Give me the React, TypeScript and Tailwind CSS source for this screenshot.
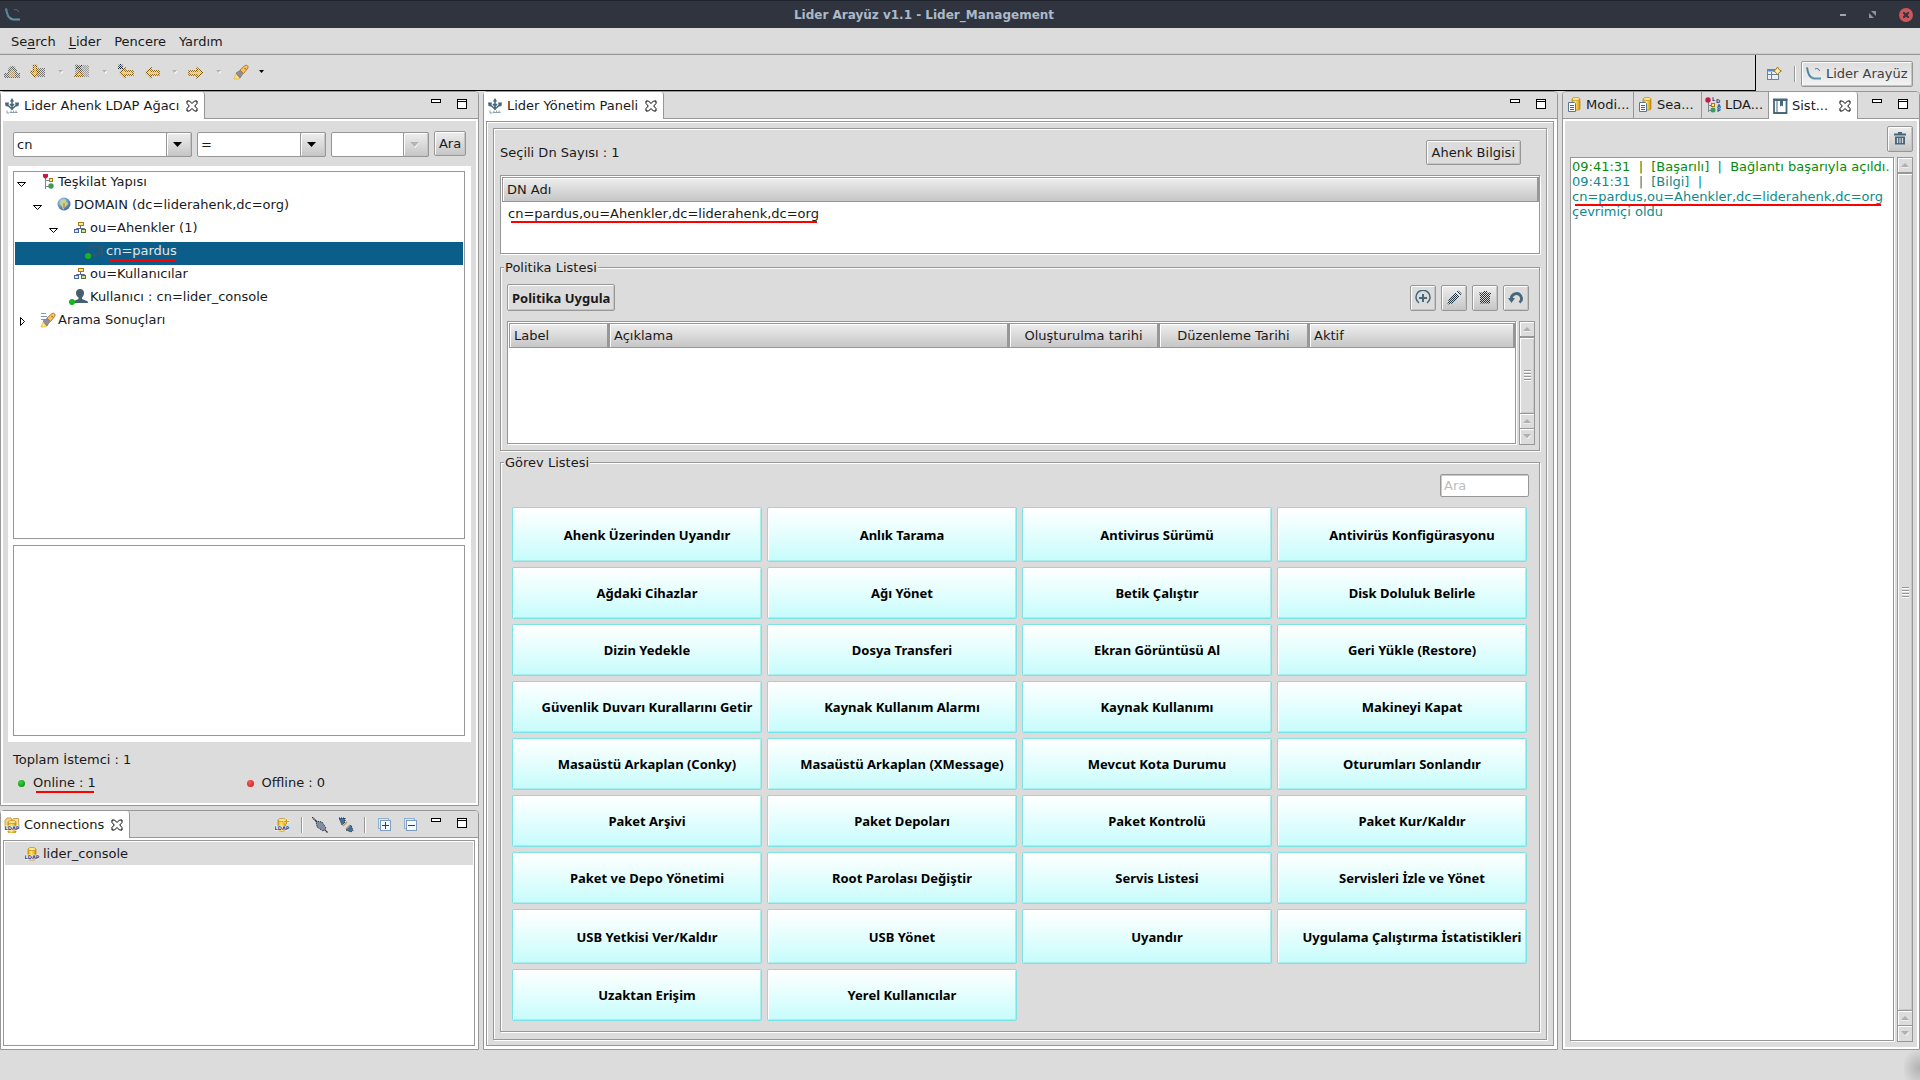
import React from "react";

type Kids = { children?: React.ReactNode };

const SUNKEN = "border border-[#979797] shadow-[inset_1px_1px_0_#fff,1px_1px_0_#fff]";
const RAISED = "border border-[#979797] rounded-[2px] shadow-[inset_1px_1px_0_#fff,inset_-1px_-1px_0_#c4c4c4]";
const SHADED = "bg-linear-to-b from-[#eeeeee] to-[#c6c6c6]";

/* ---------- icons ---------- */

function Icon({ size = 16, box = "0 0 16 16", crisp = false, children }: Kids & { size?: number; box?: string; crisp?: boolean }) {
  return (
    <svg
      width={size}
      height={size}
      viewBox={box}
      fill="none"
      className="block shrink-0"
      shapeRendering={crisp ? "crispEdges" : "auto"}
      aria-hidden="true"
    >
      {children}
    </svg>
  );
}

function IconDefs() {
  return (
    <svg width="0" height="0" className="absolute" aria-hidden="true">
      <defs>
        <pattern id="dots" width="2" height="2" patternUnits="userSpaceOnUse">
          <rect width="1" height="1" fill="#fff" />
          <rect x="1" y="1" width="1" height="1" fill="#fff" />
        </pattern>
        <mask id="dither" maskUnits="userSpaceOnUse" x="0" y="0" width="20" height="20">
          <rect width="20" height="20" fill="url(#dots)" shapeRendering="crispEdges" />
        </mask>
        <linearGradient id="gold" x1="0" x2="1">
          <stop offset="0" stopColor="#e0a20c" />
          <stop offset=".4" stopColor="#ffe970" />
          <stop offset="1" stopColor="#d08c00" />
        </linearGradient>
        <radialGradient id="globe" cx=".4" cy=".35" r=".7">
          <stop offset="0" stopColor="#cfe6f4" />
          <stop offset=".6" stopColor="#6493bf" />
          <stop offset="1" stopColor="#3c5f92" />
        </radialGradient>
      </defs>
    </svg>
  );
}

const LiderLogo = () => (
  <Icon>
    <path d="M1 1.500C2 7 3 11.500 8 12.500H15" stroke="#5f94ad" strokeWidth="2" />
    <path d="M1 1.500C2 7 3 10 5 11.500" stroke="#4c7f99" strokeWidth="1" />
    <path d="M9 3c2-1 4-.5 4.500 2" stroke="#56707f" strokeWidth="1" />
  </Icon>
);

const TreeLogo = () => (
  <Icon>
    <path d="M8 12V3M8 11L3.500 7M8 11l4.500-4M8 8L6 6M8 8l2-2" stroke="#46687a" strokeWidth="1.600" />
    <path d="M5.800 3.500L8 0l2.200 3.500zM1 4.500h4L4 8.500 1.500 8zM15 4.500h-4l1 4 2.500-.5z" fill="#46687a" />
    <path d="M3 12.500v2.500h2M7 12.500v2M9.500 12.500v2.500M12 12.500v2.500M5.500 14.500h8" stroke="#8aa0ac" />
  </Icon>
);

const CloseX = () => (
  <Icon size={12} box="0 0 12 12">
    <path
      d="M1 1h2.500L6 3.500 8.500 1H11v2.500L8.700 6 11 8.500V11H8.500L6 8.500 3.500 11H1V8.500L3.300 6 1 3.500z"
      stroke="#000"
      fill="#fff"
    />
  </Icon>
);

const MinIcon = () => (
  <Icon size={12} box="0 0 12 12" crisp>
    <rect x="1.500" y="1.500" width="9" height="3" stroke="#000" fill="#fff" />
  </Icon>
);
const MaxIcon = () => (
  <Icon size={12} box="0 0 12 12" crisp>
    <rect x="1.500" y="1.500" width="9" height="9" stroke="#000" fill="#fff" />
    <path d="M1 3.500h10" stroke="#000" />
  </Icon>
);

const ArrowShape = ({ dark = false }: { dark?: boolean }) => (
  <svg width="9" height="6" viewBox="0 0 9 6" className="block shrink-0" aria-hidden="true">
    {!dark && <path d="M1 1h8L5 6z" fill="#fff" />}
    <path d="M0 0h9L4.500 5z" fill={dark ? "#000" : "#b4b4b4"} />
  </svg>
);

const SmallArrow = ({ dark = false }: { dark?: boolean }) => (
  <svg width="5" height="4" viewBox="0 0 5 4" className="block shrink-0" aria-hidden="true">
    {!dark && <path d="M1 1h4v1L3 4z" fill="#fff" />}
    <path d="M0 0h5L2.500 3z" fill={dark ? "#000" : "#b4b4b4"} />
  </svg>
);

const Dither = ({ children }: Kids) => (
  <Icon>
    <g mask="url(#dither)">{children}</g>
  </Icon>
);

const ToolA = () => (
  <Dither>
    <path d="M4 10V5l3-3h3l3 4v4zM0 9h16v5H0z" fill="#666" />
    <path d="M5 9l3-4 3 4v4H5z" fill="#b09a70" />
  </Dither>
);
const ToolB = () => (
  <Dither>
    <path d="M7 4h8v9H7z" fill="#777" />
    <path d="M3.500 1.500h3v6h3L5 13 .5 7.500h3z" fill="#e0b860" stroke="#7a4f00" strokeWidth="1.400" />
  </Dither>
);
const ToolC = () => (
  <Dither>
    <path d="M1 1h14v12H1z" fill="#9a9a9a" />
    <path d="M1 12l4-5 4 5z" fill="#e0b860" stroke="#7a4f00" strokeWidth="1.400" />
    <path d="M2 1l6 6M8 1L2 5" stroke="#222" strokeWidth="1.500" />
  </Dither>
);
const BackArrow = ({ star = false }: { star?: boolean }) => (
  <Dither>
    <path d="M2 8.500L7 4v3h8v4H7v2.500z" fill="#e5c37a" stroke="#7a4f00" strokeWidth="1.400" />
    {star && <path d="M0 3h5M2.500 0v6M0 5l5-4M0 1l5 4" stroke="#123" strokeWidth="1.200" />}
  </Dither>
);
const NextArrow = () => (
  <Dither>
    <path d="M14.500 8.500L9 4v3H1v4h8v2.500z" fill="#e5c37a" stroke="#7a4f00" strokeWidth="1.400" />
  </Dither>
);

const Torch = ({ lines = false }: { lines?: boolean }) => (
  <Icon>
    {lines && <path d="M1 1.500h5M1 4.500h6M1 7.500h4" stroke="#7f93bd" />}
    <path d="M1 15l2-5 4 4-2 1z" fill="#ffe37a" stroke="#e0a92e" strokeWidth=".6" />
    <path d="M3 9l4-2.500L10 9.500 7 14z" fill="#8d8f9c" stroke="#666" strokeWidth=".6" />
    <path d="M7 6l5-4.500c2-.8 3.500.5 3 2.500L10.500 9.500z" fill="#f6c267" stroke="#b4701c" strokeWidth=".9" />
    <path d="M11.500 4l1.500 1.500" stroke="#8a4d12" />
  </Icon>
);

const NewPerspective = () => (
  <Icon>
    <rect x="1.500" y="3.500" width="11" height="10" fill="#e8eff7" stroke="#6f8299" />
    <path d="M1 4.500h9" stroke="#4e8fcf" strokeWidth="2" />
    <path d="M5.500 6v7M1 8.500h12" stroke="#6f8299" />
    <path d="M11.500 1l1.500 2.500 2.500 1.500L13 6.500 11.500 9 10 6.500 7.500 5 10 3.500z" fill="#fff3b8" stroke="#a87a10" />
  </Icon>
);

const TeskilatIcon = () => (
  <Icon>
    <path d="M5.500 3v12M5.500 6.500h4M5.500 12.500h4" stroke="#7b8794" />
    <path d="M3 0h5v3L5.500 5 3 3z" fill="#c41c45" />
    <rect x="9.500" y="4.500" width="3" height="3" fill="#ffe78a" stroke="#a87a10" />
    <circle cx="11" cy="12" r="2.700" fill="#3f9a58" />
  </Icon>
);
const GlobeIcon = () => (
  <Icon>
    <circle cx="8" cy="7" r="6.500" fill="url(#globe)" />
    <path d="M5 3l2 1 1-2 2 1-1 3 2-1 1 2-3 3-2 3-1-4-2-2z" fill="#c9d58c" />
    <path d="M8 6v5" stroke="#c46a2a" />
  </Icon>
);
const OuIcon = () => (
  <Icon>
    <path d="M8.500 6v3M4.500 10.500v-2h8v2" stroke="#5c6b8a" />
    <rect x="6.500" y="2.500" width="5" height="3" fill="#ffe78a" stroke="#a87a10" />
    <rect x="2.500" y="9.500" width="4" height="3" fill="#dfe8fa" stroke="#4b66a8" />
    <rect x="9.500" y="9.500" width="4" height="3" fill="#cfe89e" stroke="#4d7a2a" />
  </Icon>
);
const Dot = ({ red = false }: { red?: boolean }) => (
  <span
    className={
      red
        ? "block size-[7px] shrink-0 rounded-full bg-radial-[at_40%_35%] from-[#ff5a5a] to-[#d81f1f] to-80%"
        : "block size-[7px] shrink-0 rounded-full bg-radial-[at_40%_35%] from-[#3fd03f] to-[#0d8f12] to-80%"
    }
  />
);
const PcIcon = () => (
  <svg width="20" height="16" viewBox="0 0 20 16" className="block shrink-0" fill="none" aria-hidden="true">
    <rect x="5" y="3" width="10" height="8" stroke="#34566b" strokeWidth="1.500" />
    <path d="M7 12.500h6M18 3v9" stroke="#34566b" strokeWidth="2" />
    <circle cx="4" cy="13" r="3" fill="#18b51c" />
  </svg>
);
const UserIcon = () => (
  <svg width="20" height="16" viewBox="0 0 20 16" className="block shrink-0" fill="none" aria-hidden="true">
    <path d="M12 0c2.500 0 4 1.500 4 4 0 2-1 3.500-2 4.500v1.500l5 2c1 .5 1 1.500 1 2H5c0-1 0-1.500 1-2l4.500-2V8.500C9 7.500 8 6 8 4c0-2.500 1.500-4 4-4z" fill="#46606f" />
    <circle cx="4" cy="13" r="3" fill="#18b51c" />
  </svg>
);

const Cylinder = ({ x = 4, y = 0 }: { x?: number; y?: number }) => (
  <g>
    <path d={`M${x} ${y + 2}v10c0 1.500 8 1.500 8 0v-10z`} fill="url(#gold)" stroke="#bb8205" strokeWidth=".7" />
    <ellipse cx={x + 4} cy={y + 2} rx="4" ry="1.500" fill="#fff0a0" stroke="#bb8205" strokeWidth=".7" />
  </g>
);
const LdapMark = () => (
  <text x="8" y="13" textAnchor="middle" fontFamily="DejaVu Sans" fontSize="5" fontWeight="700" fill="#0c4a8c" stroke="#fff" strokeWidth="1" paintOrder="stroke">
    LDAP
  </text>
);
const LdapIcon = ({ plus = false, folder = false }: { plus?: boolean; folder?: boolean }) => (
  <Icon>
    {folder && <path d="M1 3.500L3 1h4l1 2v8H1z" fill="#f6d68a" stroke="#b98a2c" strokeWidth=".8" />}
    {folder && <path d="M8 3.500L9.500 1.500h5l.500 9H8z" fill="#fbe2a2" stroke="#b98a2c" strokeWidth=".8" />}
    <Cylinder y={folder ? 3 : 1} />
    {plus && <path d="M12.500 1.500v6M9.500 4.500h6" stroke="#fff4c0" strokeWidth="2" />}
    {plus && <path d="M12.500 2v5M10 4.500h5" stroke="#d39a10" />}
    <LdapMark />
  </Icon>
);
const DbPage = () => (
  <Icon>
    <Cylinder x={6} />
    <path d="M2.500 5.500h6l1 1v8h-7z" fill="#fff" stroke="#5c7399" />
    <path d="M4 8.500h4M4 10.500h4M4 12.500h4" stroke="#2a64b0" />
  </Icon>
);
const LdapTree = () => (
  <Icon>
    <path d="M3.500 4v11M3.500 8.500h3M3.500 13.500h3" stroke="#7b8794" />
    <circle cx="3" cy="3" r="2.700" fill="#c41c45" />
    <rect x="6.500" y="6.500" width="3" height="3" fill="#ffe78a" stroke="#a87a10" />
    <circle cx="8" cy="13" r="2.500" fill="#3f9a58" />
    <g fontFamily="DejaVu Sans" fontSize="5" fontWeight="700" fill="#0c4a8c">
      <text x="7" y="4">L</text>
      <text x="11" y="6">D</text>
      <text x="12" y="11">A</text>
      <text x="12" y="15">P</text>
    </g>
  </Icon>
);
const BookIcon = () => (
  <Icon>
    <path d="M2 2h12.500v13H2z" fill="#fff" stroke="#46687a" strokeWidth="1.800" />
    <path d="M5 2v13" stroke="#46687a" />
    <path d="M1 1.500h14.500" stroke="#46687a" strokeWidth="2" />
    <path d="M8 3h3v5.500L9.500 7.500 8 8.500z" fill="#46687a" />
  </Icon>
);
const TrashShape = () => (
  <g>
    <path d="M6 1h4v2H6zM2 2.500h12v2H2zM3 5.500h10v8H3z" fill="#46687a" />
    <path d="M5.500 7v5M8 7v5M10.500 7v5" stroke="#dcdcdc" strokeWidth="1.200" />
  </g>
);
const PlusCircle = () => (
  <Icon>
    <path d="M4 13a7 7 0 1 1 8 0" stroke="#46687a" strokeWidth="1.500" />
    <path d="M8 4v8M4 8h8" stroke="#46687a" strokeWidth="2" />
  </Icon>
);
const UndoIcon = () => (
  <Icon>
    <path d="M3.500 9.500a5 5 0 1 1 8 3" stroke="#46687a" strokeWidth="2.800" />
    <path d="M0 8h7L3.500 13z" fill="#46687a" />
  </Icon>
);
const PencilIcon = () => (
  <Dither>
    <path d="M2 14l1-4 7-7 3 3-7 7zM11 2l1.500-1L15 3.500 14 5z" fill="#1f3440" stroke="#1f3440" />
  </Dither>
);
const DisabledTrash = () => (
  <Dither>
    <path d="M6 1h4v2H6zM2 2.500h12v2H2zM3 4.500h10v9H3z" fill="#1f3440" />
  </Dither>
);
const PlugIcon = () => (
  <Icon>
    <path d="M0 0l16 16" stroke="#333" strokeWidth="1.500" strokeDasharray="1.500 .5" />
    <path d="M4 4l6 1 4 6-3 3-6-4z" fill="#7d8ea5" stroke="#222" strokeDasharray="1 1" />
  </Icon>
);
const UnplugIcon = () => (
  <Icon>
    <path d="M1 1h6v4L4 8z" fill="#41719f" stroke="#222" strokeDasharray="1 1" />
    <path d="M8 13l5-5 2 5.500-2 1.500z" fill="#41719f" stroke="#222" strokeDasharray="1 1" />
    <path d="M5 9l4-4M8 12l4-4" stroke="#b39a7a" strokeWidth="1.500" />
  </Icon>
);
const BoxIcon = ({ plus = false }: { plus?: boolean }) => (
  <Icon crisp>
    <rect x="2.500" y="1.500" width="10" height="10" fill="#dce9f5" stroke="#8fb0cf" />
    <rect x="4.500" y="3.500" width="10" height="10" fill="#f4fbff" stroke="#7f9cc0" />
    <path d="M6 8.500h7" stroke="#0c4a8c" />
    {plus && <path d="M9.500 5v7" stroke="#0c4a8c" />}
  </Icon>
);

/* ---------- building blocks ---------- */

function TabClose() {
  return (
    <button type="button" aria-label="Kapat">
      <CloseX />
    </button>
  );
}

function MinMax() {
  return (
    <div className="ml-auto flex h-full items-start gap-[14px] pt-[6px] pr-[10px]">
      <button type="button" aria-label="Küçült"><MinIcon /></button>
      <button type="button" aria-label="Büyüt"><MaxIcon /></button>
    </div>
  );
}

function ActiveTab({ icon, label, gap = "mr-[7px]" }: { icon: React.ReactNode; label: string; gap?: string }) {
  return (
    <div className="flex h-[27px] shrink-0 items-center rounded-tr-[3px] border-r border-[#979797] bg-white pr-1.5 pl-[3px]">
      {icon}
      <button type="button" role="tab" aria-selected="true" className={`ml-1 ${gap}`}>
        {label}
      </button>
      <TabClose />
    </div>
  );
}

function Panel({ tabs, tools, className, children }: Kids & { tabs: React.ReactNode; tools?: React.ReactNode; className?: string }) {
  return (
    <section className={`flex min-w-0 flex-col rounded-t-[4px] border border-[#979797] bg-white ${className ?? ""}`}>
      <div className="flex h-[27px] shrink-0 rounded-t-[3px] bg-[#dcdcdc] bg-linear-to-t from-[#979797] from-[1px] to-transparent to-[1px]">
        {tabs}
        {tools}
        {tools ? null : <MinMax />}
      </div>
      {children}
    </section>
  );
}

function Combo({ label, value, disabled = false, className }: { label: string; value: string; disabled?: boolean; className: string }) {
  return (
    <div className={`relative h-[25px] ${className}`}>
      <select
        aria-label={label}
        defaultValue={value}
        className="h-full w-full appearance-none rounded-[2px] border border-[#979797] bg-white pr-7 pl-[3px] outline-none"
      >
        <option>{value}</option>
      </select>
      <span className={`pointer-events-none absolute top-0 right-0 flex h-full w-[26px] items-center justify-center pr-1 ${RAISED} ${SHADED}`}>
        <ArrowShape dark={!disabled} />
      </span>
    </div>
  );
}

function TreeRow({ depth, open, icon, label, selected = false }: {
  depth: string;
  open?: boolean;
  icon: React.ReactNode;
  label: string;
  selected?: boolean;
}) {
  return (
    <li
      role="treeitem"
      aria-selected={selected}
      className={`flex h-[23px] items-center pb-[5px] ${depth} ${selected ? "bg-[#0b5e8a] text-[#e6e6e6]" : ""}`}
    >
      <span className="flex w-[21px] shrink-0 justify-start pt-[3px] pl-px">
        {open !== undefined && (
          <button type="button" aria-label={open ? "Daralt" : "Genişlet"}>
            <svg width="11" height="11" viewBox="0 0 11 11" fill="#fff" stroke="#000" className="block" aria-hidden="true">
              {open ? <path d="M1.500 4.500h8l-4 4z" /> : <path d="M4.500 1.500v8l4-4z" />}
            </svg>
          </button>
        )}
      </span>
      <span className="flex w-[22px] shrink-0 justify-end pr-[2px]">{icon}</span>
      {selected ? <Marked>{label}</Marked> : <span>{label}</span>}
    </li>
  );
}

/* text with a red marker line under it */
function Marked({ children, className = "" }: Kids & { className?: string }) {
  return (
    <span className={`relative ${className}`}>
      {children}
      <span className="absolute right-[2px] bottom-[-2px] left-[3px] h-[2px] bg-[#ff0000]" />
    </span>
  );
}

function ScrollButton({ up = false }: { up?: boolean }) {
  return (
    <span className="flex h-[15px] shrink-0 items-center justify-center border-b border-[#979797] shadow-[inset_1px_1px_0_#fff] last:border-b-0">
      <svg width="8" height="5" viewBox="0 0 8 5" className="block" aria-hidden="true">
        {up ? <path d="M0 4.500h8V5H0z" fill="#fff" /> : <path d="M4 5l4-4v1L5 5z" fill="#fff" />}
        {up ? <path d="M4 0l4 4H0z" fill="#b0b0b0" /> : <path d="M0 0h8L4 4z" fill="#b0b0b0" />}
      </svg>
    </span>
  );
}

function ScrollBar() {
  return (
    <div className="flex w-4 shrink-0 flex-col border border-[#979797] bg-[#dcdcdc]" aria-hidden="true">
      <ScrollButton up />
      <span className="flex flex-1 flex-col items-center justify-center gap-px border-y border-[#979797] shadow-[inset_1px_1px_0_#fff,inset_-1px_-1px_0_#c8c8c8]">
        {[0, 1, 2, 3].map((n) => (
          <span key={n} className="h-[2px] w-[7px] border-t border-[#979797] bg-white" />
        ))}
      </span>
      <ScrollButton up />
      <ScrollButton />
    </div>
  );
}

const HEAD = `h-[25px] border-t border-r-2 border-b border-l border-[#979797] px-1 text-left font-normal shadow-[inset_1px_1px_0_#fff] ${SHADED}`;

function SquareButton({ label, shaded = false, children }: Kids & { label: string; shaded?: boolean }) {
  return (
    <button type="button" aria-label={label} className={`flex size-[26px] items-center justify-center ${RAISED} ${shaded ? SHADED : "bg-[#dcdcdc]"}`}>
      {children}
    </button>
  );
}

const TASKS: string[][] = [
  ["Ahenk Üzerinden Uyandır", "Anlık Tarama", "Antivirus Sürümü", "Antivirüs Konfigürasyonu"],
  ["Ağdaki Cihazlar", "Ağı Yönet", "Betik Çalıştır", "Disk Doluluk Belirle"],
  ["Dizin Yedekle", "Dosya Transferi", "Ekran Görüntüsü Al", "Geri Yükle (Restore)"],
  ["Güvenlik Duvarı Kurallarını Getir", "Kaynak Kullanım Alarmı", "Kaynak Kullanımı", "Makineyi Kapat"],
  ["Masaüstü Arkaplan (Conky)", "Masaüstü Arkaplan (XMessage)", "Mevcut Kota Durumu", "Oturumları Sonlandır"],
  ["Paket Arşivi", "Paket Depoları", "Paket Kontrolü", "Paket Kur/Kaldır"],
  ["Paket ve Depo Yönetimi", "Root Parolası Değiştir", "Servis Listesi", "Servisleri İzle ve Yönet"],
  ["USB Yetkisi Ver/Kaldır", "USB Yönet", "Uyandır", "Uygulama Çalıştırma İstatistikleri"],
  ["Uzaktan Erişim", "Yerel Kullanıcılar"],
];
const TALL_ROWS = [0, 7];

/* ---------- page regions ---------- */

function TitleBar() {
  return (
    <header className="grid h-7 grid-cols-[1fr_auto_1fr] items-center border-t border-[#20242c] bg-[#2f343f] pr-[7px] pl-[5px]">
      <LiderLogo />
      <h1 className="pr-[70px] text-[12px] font-bold text-[#aeb9c8]">Lider Arayüz v1.1 - Lider_Management</h1>
      <div className="flex items-center justify-end gap-[23px]">
        <button type="button" aria-label="Simge durumuna küçült" className="h-[2px] w-[6px] bg-[#9ea6b3]" />
        <button type="button" aria-label="Geri yükle">
          <svg width="7" height="7" viewBox="0 0 7 7" className="block" aria-hidden="true">
            <path d="M2 0h5v5zM0 2l5 5H0z" fill="#8d94a0" />
          </svg>
        </button>
        <button type="button" aria-label="Pencereyi kapat" className="flex size-[14px] items-center justify-center rounded-full bg-[#cc575d]">
          <svg width="6" height="6" viewBox="0 0 6 6" stroke="#2f343f" strokeWidth="2" aria-hidden="true">
            <path d="M0 0l6 6M6 0L0 6" />
          </svg>
        </button>
      </div>
    </header>
  );
}

function MenuBar() {
  return (
    <nav className="flex h-[27px] items-center gap-[13px] border-b border-[#979797] pt-0.5 pl-[11px] shadow-[inset_0_-1px_0_#cdcdcd]">
      <button type="button">Se<u className="underline-offset-2">a</u>rch</button>
      <button type="button"><u className="underline-offset-2">L</u>ider</button>
      <button type="button">Pencere</button>
      <button type="button">Yardım</button>
    </nav>
  );
}

function ToolBar() {
  return (
    <div className="flex h-9">
      <div className="flex flex-1 items-center border-r border-b border-black pb-0.5 pl-1">
        <button type="button" aria-label="Kaydet"><ToolA /></button>
        <button type="button" aria-label="İndir" className="ml-[10px] flex items-center gap-[12px]"><ToolB /><SmallArrow /></button>
        <button type="button" aria-label="Seç" className="ml-[11px] flex items-center gap-[12px]"><ToolC /><SmallArrow /></button>
        <button type="button" aria-label="Son düzenleme" className="ml-[11px]"><BackArrow star /></button>
        <button type="button" aria-label="Geri" className="ml-[10px] flex items-center gap-[12px]"><BackArrow /><SmallArrow /></button>
        <button type="button" aria-label="İleri" className="ml-[11px] flex items-center gap-[12px]"><NextArrow /><SmallArrow /></button>
        <button type="button" aria-label="Ara aracı" className="ml-[12px] flex items-center gap-[10px]"><Torch /><SmallArrow dark /></button>
      </div>
      <div className="flex w-[164px] items-center pt-0.5 pl-[10px]">
        <button type="button" aria-label="Perspektif aç"><NewPerspective /></button>
        <span className="ml-[12px] h-4 w-[2px] border-l border-[#979797] bg-white" />
        <button type="button" className={`ml-[5px] flex h-[26px] items-center gap-1 px-1 text-[#404040] ${RAISED} bg-linear-to-b from-[#dcdcdc] to-[#f4f4f4]`}>
          <LiderLogo />
          <span className="whitespace-nowrap">Lider Arayüz</span>
        </button>
      </div>
    </div>
  );
}

function DirectoryPanel() {
  return (
    <Panel className="flex-[716]" tabs={<ActiveTab icon={<TreeLogo />} label="Lider Ahenk LDAP Ağacı" />}>
      <div className="mx-[2px] my-[2px] flex flex-1 flex-col bg-[#dcdcdc]">
        <div className="flex gap-[5px] px-[10px] pt-[10px] pb-[9px]">
          <Combo label="Öznitelik" value="cn" className="mt-px w-[179px]" />
          <Combo label="İşleç" value="=" className="mt-px w-[129px]" />
          <Combo label="Değer" value="" disabled className="mt-px w-[98px]" />
          <button type="button" className={`h-[25px] w-8 ${RAISED} ${SHADED}`}>Ara</button>
        </div>
        <div className="mx-[5px] flex flex-1 flex-col gap-[6px] bg-white p-[5px] pr-[6px] pb-[6px]">
          <ul role="tree" aria-label="LDAP Ağacı" className="flex-[369] border border-[#979797] p-px">
            <TreeRow depth="pl-0" open icon={<TeskilatIcon />} label="Teşkilat Yapısı" />
            <TreeRow depth="pl-4" open icon={<GlobeIcon />} label="DOMAIN (dc=liderahenk,dc=org)" />
            <TreeRow depth="pl-8" open icon={<OuIcon />} label="ou=Ahenkler (1)" />
            <TreeRow depth="pl-12" icon={<PcIcon />} label="cn=pardus" selected />
            <TreeRow depth="pl-8" icon={<OuIcon />} label="ou=Kullanıcılar" />
            <TreeRow depth="pl-8" icon={<UserIcon />} label="Kullanıcı : cn=lider_console" />
            <TreeRow depth="pl-0" open={false} icon={<Torch lines />} label="Arama Sonuçları" />
          </ul>
          <div className="flex-[191] border border-[#979797]" />
        </div>
        <div className="flex flex-col gap-[7px] px-[10px] pt-[10px] pb-[12px]">
          <p>Toplam İstemci : 1</p>
          <div className="grid grid-cols-2">
            <p className="flex items-center gap-2 pl-[5px]"><Dot /><Marked>Online : 1</Marked></p>
            <p className="flex items-center gap-2 pl-[7px]"><Dot red />Offline : 0</p>
          </div>
        </div>
      </div>
    </Panel>
  );
}

function ConnectionsPanel() {
  const tools = (
    <div className="ml-auto flex">
      <div className="flex items-center">
        <button type="button" aria-label="Yeni bağlantı"><LdapIcon plus /></button>
        <span className="mr-[9px] ml-[11px] h-4 w-[2px] border-l border-[#979797] bg-white" />
        <button type="button" aria-label="Bağlan"><PlugIcon /></button>
        <button type="button" aria-label="Bağlantıyı kes" className="ml-[10px]"><UnplugIcon /></button>
        <span className="mr-[10px] ml-[10px] h-4 w-[2px] border-l border-[#979797] bg-white" />
        <button type="button" aria-label="Tümünü genişlet"><BoxIcon plus /></button>
        <button type="button" aria-label="Tümünü daralt" className="mr-[12px] ml-[10px]"><BoxIcon /></button>
      </div>
      <MinMax />
    </div>
  );
  return (
    <Panel className="flex-[239]" tabs={<ActiveTab icon={<LdapIcon folder />} label="Connections" />} tools={tools}>
      <ul className="mt-[2px] mr-[3px] mb-[3px] ml-[2px] flex-1 border border-[#979797] p-px">
        <li className="flex h-[23px] items-center gap-[3px] bg-[#dcdcdc] pl-[19px]">
          <LdapIcon />
          lider_console
        </li>
      </ul>
    </Panel>
  );
}

function ManagementPanel() {
  return (
    <Panel tabs={<ActiveTab icon={<TreeLogo />} label="Lider Yönetim Paneli" />}>
      <div className="mt-[2px] mr-[3px] mb-[3px] ml-[2px] flex flex-1 flex-col border border-[#979797] bg-[#dcdcdc] p-[6px] pb-[5px] shadow-[inset_1px_1px_0_#fff]">
        <div className={`flex flex-1 flex-col p-[6px] pt-[11px] pb-[7px] ${SUNKEN}`}>
          <div className="flex h-[25px] items-center justify-between pr-[19px]">
            <p>Seçili Dn Sayısı : 1</p>
            <button type="button" className={`h-full px-[5px] ${RAISED}`}>Ahenk Bilgisi</button>
          </div>
          <div className="mt-[10px] h-[79px] border border-[#979797] bg-white pt-px pl-px shadow-[1px_1px_0_#fff]">
            <table className="w-full border-separate border-spacing-0">
              <thead>
                <tr><th className={HEAD}>DN Adı</th></tr>
              </thead>
              <tbody>
                <tr><td className="h-[23px] pl-1.5"><Marked>cn=pardus,ou=Ahenkler,dc=liderahenk,dc=org</Marked></td></tr>
              </tbody>
            </table>
          </div>

          <fieldset className={`mt-[5px] min-w-0 pt-[8px] pr-1 pb-[5px] pl-[6px] ${SUNKEN}`}>
            <legend className="-ml-[3px] bg-[#dcdcdc] px-px leading-[17px]">Politika Listesi</legend>
            <div className="flex h-[27px] items-end justify-between pr-[6px]">
              <button type="button" className={`h-[27px] px-1 font-['Noto_Sans'] font-bold ${RAISED}`}>Politika Uygula</button>
              <div className="flex gap-[5px]">
                <SquareButton label="Ekle"><PlusCircle /></SquareButton>
                <SquareButton label="Düzenle" shaded><PencilIcon /></SquareButton>
                <SquareButton label="Sil" shaded><DisabledTrash /></SquareButton>
                <SquareButton label="Yenile"><UndoIcon /></SquareButton>
              </div>
            </div>
            <div className="mt-[10px] flex h-[124px] gap-[3px]">
              <div className="mb-px flex-1 border border-[#979797] bg-white pt-px pl-px shadow-[1px_1px_0_#fff]">
                <table className="w-full table-fixed border-separate border-spacing-0">
                  <thead>
                    <tr>
                      <th className={`w-[100px] ${HEAD}`}>Label</th>
                      <th className={HEAD}>Açıklama</th>
                      <th className={`w-[150px] ${HEAD}`}><span className="block text-center">Oluşturulma tarihi</span></th>
                      <th className={`w-[150px] ${HEAD}`}><span className="block text-center">Düzenleme Tarihi</span></th>
                      <th className={`w-[206px] ${HEAD}`}>Aktif</th>
                    </tr>
                  </thead>
                </table>
              </div>
              <ScrollBar />
            </div>
          </fieldset>

          <fieldset className={`mt-[3px] min-w-0 flex-1 pt-[3px] pr-3 pb-[10px] pl-[11px] ${SUNKEN}`}>
            <legend className="-ml-[8px] bg-[#dcdcdc] px-px leading-[17px]">Görev Listesi</legend>
            <div className="-mr-[2px] flex justify-end">
              <input
                type="text"
                aria-label="Görev ara"
                placeholder="Ara"
                className="h-[23px] w-[89px] rounded-[2px] border border-[#979797] bg-white px-[3px] shadow-[inset_1px_1px_0_#c8c8c8] outline-none placeholder:text-[#bdbdbd]"
              />
            </div>
            <div className="mt-[10px] grid grid-cols-4 gap-[5px] font-['Noto_Sans'] font-bold text-black">
              {TASKS.map((row, r) =>
                row.map((name) => (
                  <button
                    key={name}
                    type="button"
                    className={`${TALL_ROWS.includes(r) ? "h-[55px]" : "h-[52px]"} overflow-hidden rounded-[2px] border border-[#7be3e3] bg-linear-to-b from-white to-[#c6fcfc] pl-[20px] whitespace-nowrap shadow-[inset_1px_1px_0_#fff,inset_-1px_-1px_0_#a9eeee]`}
                  >
                    {name}
                  </button>
                )),
              )}
            </div>
          </fieldset>
        </div>
      </div>
    </Panel>
  );
}

function IdleTab({ icon, label, className }: { icon: React.ReactNode; label: string; className: string }) {
  return (
    <button
      type="button"
      role="tab"
      aria-selected="false"
      className={`flex h-[26px] shrink-0 items-center border-r border-[#979797] ${className}`}
    >
      {icon}
      {label}
    </button>
  );
}

function LogPanel() {
  return (
    <Panel
      tabs={
        <>
          <IdleTab icon={<DbPage />} label="Modi..." className="w-[71px] gap-1 pl-[3px]" />
          <IdleTab icon={<DbPage />} label="Sea..." className="w-[68px] gap-1 pl-[3px]" />
          <IdleTab icon={<LdapTree />} label="LDA..." className="w-[67px] gap-1 pl-[3px]" />
          <ActiveTab icon={<BookIcon />} label="Sist..." gap="mr-[11px]" />
        </>
      }
    >
      <div className="m-[2px] flex flex-1 flex-col bg-[#dcdcdc] pr-[4px] pb-[5px] pl-[5px]">
        <div className="flex justify-end pt-[5px] pb-[5px]">
          <SquareButton label="Günlüğü temizle" shaded><Icon><TrashShape /></Icon></SquareButton>
        </div>
        <div className="flex min-h-0 flex-1 gap-[3px]">
          <div role="log" className="mb-px flex-1 border border-[#979797] bg-white px-px py-px leading-[15px] text-[#0f8a8a] shadow-[1px_1px_0_#fff]">
            <p className="whitespace-nowrap text-[#0a8a0a]">09:41:31 &nbsp;|&nbsp; [Başarılı] &nbsp;|&nbsp; Bağlantı başarıyla açıldı.</p>
            <p>09:41:31 &nbsp;|&nbsp; [Bilgi] &nbsp;|</p>
            <p><Marked>cn=pardus,ou=Ahenkler,dc=liderahenk,dc=org</Marked></p>
            <p>çevrimiçi oldu</p>
          </div>
          <ScrollBar />
        </div>
      </div>
    </Panel>
  );
}

export default function App() {
  return (
    <div className="flex min-h-screen flex-col bg-[#dcdcdc] font-['DejaVu_Sans',sans-serif] text-[13px] leading-4 text-[#1a1a1a]">
      <IconDefs />
      <TitleBar />
      <MenuBar />
      <ToolBar />
      <main className="grid flex-1 grid-cols-[479px_minmax(0,1fr)_358px] gap-1">
        <div className="flex flex-col gap-1">
          <DirectoryPanel />
          <ConnectionsPanel />
        </div>
        <ManagementPanel />
        <LogPanel />
      </main>
      <footer className="flex h-[30px] justify-end overflow-hidden">
        <span className="h-full w-4 bg-radial-[at_100%_60%] from-[#b0b0b0] to-[#dcdcdc] to-80%" />
      </footer>
    </div>
  );
}
